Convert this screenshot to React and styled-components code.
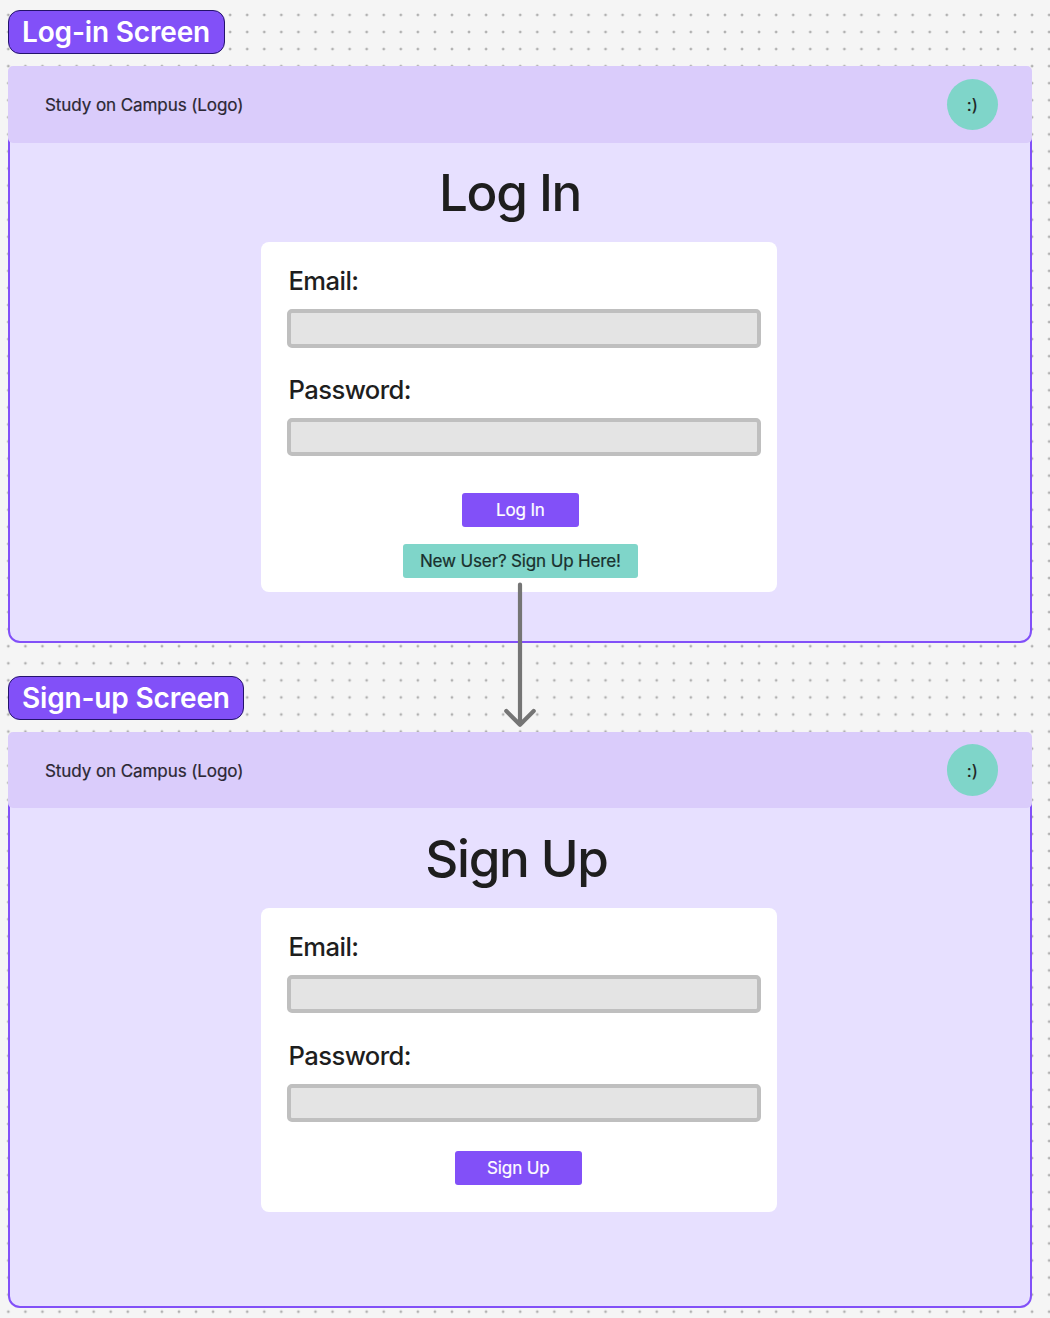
import React from "react";
import styled, { createGlobalStyle } from "styled-components";

const GlobalStyle = createGlobalStyle`
  * { box-sizing: border-box; }
  body {
    margin: 0;
    background: #f5f5f5;
    font-family: Inter, "Liberation Sans", sans-serif;
    color: #1e1e1e;
  }
`;

const Board = styled.main`
  position: relative;
  width: 1050px;
  height: 1318px;
  overflow: hidden;
  padding: 10px 18px 0 8px;
  display: flex;
  flex-direction: column;
  gap: 33.2px;
  background-image: radial-gradient(circle at 50% 50%, #b0b0b0 1px, rgba(176, 176, 176, 0) 1.7px);
  background-size: 17.0667px 17.0667px;
  background-position: -0.2px 6.4px;
`;

const Section = styled.section`
  display: flex;
  flex-direction: column;
  align-items: flex-start;
  gap: 12.1px;
`;

const Tag = styled.div`
  height: 43.8px;
  width: ${(p) => p.$width}px;
  padding-left: 13px;
  display: flex;
  align-items: center;
  border: 1px solid #24136b;
  border-radius: 12px;
  background: #8250f8;
  color: #fff;
  font-size: 28px;
  font-weight: 600;
  letter-spacing: -0.17px;
  white-space: nowrap;
`;

const Screen = styled.div`
  width: 1024px;
  height: 576.7px;
  display: flex;
  flex-direction: column;
  align-items: center;
  border-radius: 12px;
  background: #e7e0ff;
  box-shadow: inset 0 0 0 2px #8250f8;
`;

const Header = styled.header`
  width: 100%;
  height: 76.8px;
  flex: none;
  padding: 0 34.1px 0 37px;
  display: flex;
  align-items: center;
  justify-content: space-between;
  border-radius: 5px;
  background: #daccfb;
`;

const Logo = styled.span`
  padding-top: 1px;
  font-size: 17.07px;
  line-height: 20px;
  letter-spacing: -0.11px;
  color: #2b2733;
  -webkit-text-stroke: 0.2px currentColor;
`;

const Avatar = styled.span`
  width: 51.2px;
  height: 51.2px;
  display: grid;
  place-items: center;
  border-radius: 50%;
  background: #7fd5c9;
  font-size: 17.07px;
  -webkit-text-stroke: 0.2px currentColor;
`;

const Title = styled.h1`
  height: 62px;
  margin: 18px 0 19.1px;
  line-height: 62px;
  font-size: 51.2px;
  font-weight: 500;
  letter-spacing: -0.026em;
  white-space: nowrap;
  transform: translate(${(p) => p.$shift}px, ${(p) => p.$drop || 0}px);
`;

const Card = styled.form`
  width: 516px;
  height: ${(p) => p.$height}px;
  margin-right: 2px;
  padding: 23.5px 16px 0 25.6px;
  display: flex;
  flex-direction: column;
  align-items: center;
  border-radius: 8px;
  background: #fff;
`;

const Field = styled.label`
  width: 100%;
  height: 108.8px;
  flex: none;
  display: flex;
  flex-direction: column;
  gap: 13.1px;
`;

const FieldName = styled.span`
  height: 31px;
  padding-left: 1.9px;
  line-height: 31px;
  font-size: 25.6px;
  font-weight: 500;
  letter-spacing: -0.022em;
`;

const Input = styled.input`
  width: 474.2px;
  height: 38.2px;
  border: 4px solid #bfbfbf;
  border-radius: 5px;
  background: #e4e4e4;
  outline: none;
`;

const Actions = styled.div`
  display: flex;
  flex-direction: column;
  align-items: center;
  gap: 17px;
  padding-top: ${(p) => p.$top}px;
  margin-left: ${(p) => p.$left}px;
`;

const Button = styled.button`
  width: ${(p) => p.$width}px;
  height: 34.2px;
  padding: 0;
  border: 0;
  border-radius: 3px;
  background: ${(p) => (p.$secondary ? "#7fd5c9" : "#8250f8")};
  color: ${(p) => (p.$secondary ? "#19302d" : "#fff")};
  font: 400 17.07px Inter, "Liberation Sans", sans-serif;
  letter-spacing: -0.17px;
  -webkit-text-stroke: 0.2px currentColor;
  white-space: nowrap;
`;

const Connector = styled.svg`
  position: absolute;
  left: 500px;
  top: 578px;
`;

function Mockup({ label, tagWidth, title, shift, drop, cardHeight, children }) {
  return (
    <Section>
      <Tag $width={tagWidth}>{label}</Tag>
      <Screen>
        <Header>
          <Logo>Study on Campus (Logo)</Logo>
          <Avatar>:)</Avatar>
        </Header>
        <Title $shift={shift} $drop={drop}>{title}</Title>
        <Card $height={cardHeight}>
          <Field>
            <FieldName>Email:</FieldName>
            <Input type="email" />
          </Field>
          <Field>
            <FieldName>Password:</FieldName>
            <Input type="password" />
          </Field>
          {children}
        </Card>
      </Screen>
    </Section>
  );
}

export default function App() {
  return (
    <>
      <GlobalStyle />
      <Board>
        <Mockup label="Log-in Screen" tagWidth={216.5} title="Log In" shift={-10} drop={-0.5} cardHeight={350}>
          <Actions $top={9.7} $left={-6.8}>
            <Button type="button" $width={116.3}>Log In</Button>
            <Button type="button" $width={234.4} $secondary>New User? Sign Up Here!</Button>
          </Actions>
        </Mockup>
        <Mockup label="Sign-up Screen" tagWidth={235.5} title="Sign Up" shift={-3.5} drop={1} cardHeight={304}>
          <Actions $top={2.2} $left={-11}>
            <Button type="button" $width={127}>Sign Up</Button>
          </Actions>
        </Mockup>
        <Connector width="40" height="152" fill="none" stroke="#757575" strokeWidth="4.2" strokeLinecap="round" strokeLinejoin="round">
          <path d="M20 6.5V146.5M6.3 133L20 146.7L33.7 133" />
        </Connector>
      </Board>
    </>
  );
}
